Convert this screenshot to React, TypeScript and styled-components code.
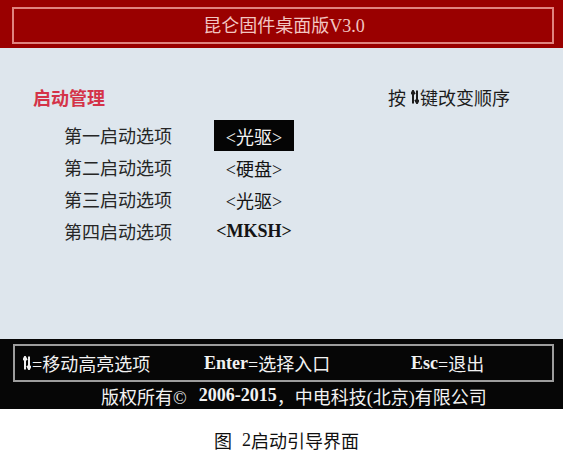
import React from "react";
import styled, { createGlobalStyle } from "styled-components";

const Global = createGlobalStyle`
  html, body { margin: 0; padding: 0; background: #ffffff; }
  body { font-family: "Liberation Serif", "Noto Sans CJK SC", serif; }
`;

const Page = styled.div`
  width: 568px;
  height: 453px;
  background: #ffffff;
  display: flex;
  flex-direction: column;
`;

const Screen = styled.div`
  width: 563px;
  display: flex;
  flex-direction: column;
`;

const Header = styled.div`
  height: 48px;
  box-sizing: border-box;
  background: #9a0000;
  padding: 7px 9px 4px 12px;
  display: flex;
`;

const TitleFrame = styled.div`
  flex: 1;
  box-sizing: border-box;
  border: 2px solid #e0837f;
  display: flex;
  align-items: center;
  justify-content: center;
  color: #f2c6c2;
  font-size: 18px;
  line-height: 24px;
  padding-left: 2px;
`;

const Body = styled.div`
  height: 291px;
  box-sizing: border-box;
  background: #dee6ed;
  padding-top: 37px;
  display: flex;
  flex-direction: column;
`;

const HeadRow = styled.div`
  display: flex;
  justify-content: space-between;
  align-items: center;
  padding: 0 53px 0 33px;
  height: 24px;
  font-size: 18px;
`;

const SectionTitle = styled.span`
  color: #d43348;
  font-weight: bold;
`;

const Hint = styled.span`
  color: #1c1c1c;
  display: flex;
  align-items: center;
`;

const ArrowIcon = styled.svg<{ $left?: number; $right?: number }>`
  display: inline-block;
  margin: 0 ${(p) => p.$right ?? 1}px 0 ${(p) => p.$left ?? 1}px;
  flex: none;
`;

const Options = styled.div`
  margin-top: 10px;
  display: grid;
  grid-template-columns: 150px 80px;
  grid-auto-rows: 32px;
  padding-left: 64px;
  font-size: 18px;
`;

const Label = styled.div`
  color: #262626;
  display: flex;
  align-items: center;
`;

const Value = styled.div<{ $selected?: boolean; $bold?: boolean }>`
  display: flex;
  align-items: center;
  justify-content: center;
  margin: 1px 0 0;
  height: 31px;
  background: ${(p) => (p.$selected ? "#050505" : "transparent")};
  color: ${(p) => (p.$selected ? "#f4f4f4" : "#141414")};
  font-weight: ${(p) => (p.$bold ? "bold" : "normal")};
`;

const Footer = styled.div`
  height: 70px;
  box-sizing: border-box;
  background: #060606;
  padding: 5px 9px 0 13px;
  display: flex;
  flex-direction: column;
`;

const KeyFrame = styled.div`
  height: 38px;
  box-sizing: border-box;
  border: 2px solid #9d9d9d;
  display: flex;
  align-items: center;
  padding-left: 8px;
  color: #f2f2f2;
  font-size: 18px;
`;

const KeyItem = styled.span<{ $width?: number }>`
  width: ${(p) => (p.$width ? `${p.$width}px` : "auto")};
  display: flex;
  align-items: center;
  flex: none;
`;

const KeyName = styled.b`
  font-weight: bold;
`;

const Copyright = styled.div`
  height: 27px;
  display: flex;
  align-items: center;
  padding-left: 88px;
  color: #f2f2f2;
  font-size: 18px;
`;

const Years = styled.b`
  font-weight: bold;
  margin-left: 12px;
`;

const Caption = styled.div`
  display: flex;
  align-items: center;
  justify-content: center;
  padding-left: 5px;
  padding-top: 18px;
  box-sizing: border-box;
  height: 62px;
  color: #111111;
  font-size: 18px;
`;

const CaptionNum = styled.span`
  margin-left: 10px;
`;

function UpDown({ color, left, right }: { color: string; left?: number; right?: number }) {
  return (
    <ArrowIcon $left={left} $right={right} width="8" height="14" viewBox="0 0 8 14">
      <path d="M2 13.5 V2.4 M0.2 4.2 L2 0.8 L3.8 4.2" stroke={color} strokeWidth="2" fill="none" />
      <path d="M6 0.5 V11.6 M4.2 9.8 L6 13.2 L7.8 9.8" stroke={color} strokeWidth="2" fill="none" />
    </ArrowIcon>
  );
}

const rows = [
  { label: "第一启动选项", value: "<光驱>", selected: true },
  { label: "第二启动选项", value: "<硬盘>" },
  { label: "第三启动选项", value: "<光驱>" },
  { label: "第四启动选项", value: "<MKSH>", bold: true },
];

export default function App() {
  return (
    <>
      <Global />
      <Page>
        <Screen>
          <Header>
            <TitleFrame>昆仑固件桌面版V3.0</TitleFrame>
          </Header>
          <Body>
            <HeadRow>
              <SectionTitle>启动管理</SectionTitle>
              <Hint>
                按<UpDown color="#1c1c1c" left={5} right={1} />键改变顺序
              </Hint>
            </HeadRow>
            <Options>
              {rows.map((r) => (
                <React.Fragment key={r.label}>
                  <Label>{r.label}</Label>
                  <Value $selected={r.selected} $bold={r.bold}>
                    {r.value}
                  </Value>
                </React.Fragment>
              ))}
            </Options>
          </Body>
          <Footer>
            <KeyFrame>
              <KeyItem $width={181}>
                <UpDown color="#f2f2f2" left={0} right={1} />=移动高亮选项
              </KeyItem>
              <KeyItem $width={207}>
                <KeyName>Enter</KeyName>=选择入口
              </KeyItem>
              <KeyItem>
                <KeyName>Esc</KeyName>=退出
              </KeyItem>
            </KeyFrame>
            <Copyright>
              版权所有©<Years>2006-2015</Years>，中电科技(北京)有限公司
            </Copyright>
          </Footer>
        </Screen>
        <Caption>
          图<CaptionNum>2</CaptionNum>启动引导界面
        </Caption>
      </Page>
    </>
  );
}
